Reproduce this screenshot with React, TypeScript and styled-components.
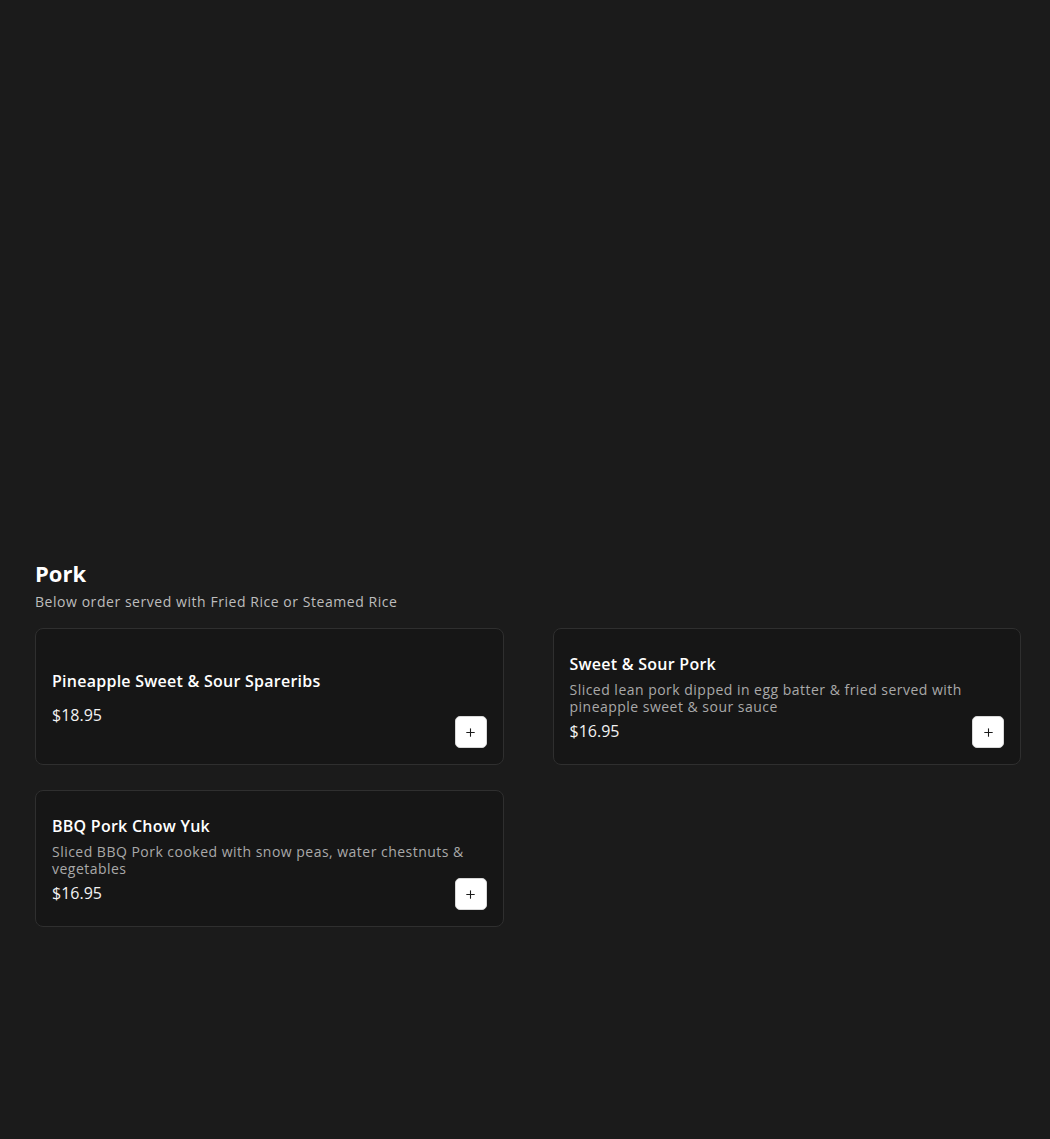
import styled, { createGlobalStyle } from "styled-components";
import { Plus } from "lucide-react";

type MenuItem = {
  id: number;
  name: string;
  description?: string;
  price: string;
};

const items: MenuItem[] = [
  { id: 1, name: "Pineapple Sweet & Sour Spareribs", price: "$18.95" },
  {
    id: 2,
    name: "Sweet & Sour Pork",
    description:
      "Sliced lean pork dipped in egg batter & fried served with pineapple sweet & sour sauce",
    price: "$16.95",
  },
  {
    id: 3,
    name: "BBQ Pork Chow Yuk",
    description:
      "Sliced BBQ Pork cooked with snow peas, water chestnuts & vegetables",
    price: "$16.95",
  },
];

const App = () => {
  return (
    <>
      <GlobalStyle />
      <Page>
        <Section>
          <SectionTitle>Pork</SectionTitle>
          <SectionNote>Below order served with Fried Rice or Steamed Rice</SectionNote>
          <Grid>
            {items.map((item) => (
              <Card key={item.id}>
                <CardText>
                  <ItemName>{item.name}</ItemName>
                  {item.description ? (
                    <ItemDescription>{item.description}</ItemDescription>
                  ) : (
                    <Spacer />
                  )}
                  <Price>{item.price}</Price>
                </CardText>
                <AddButton aria-label="Add">
                  <Plus size={13} strokeWidth={2} />
                </AddButton>
              </Card>
            ))}
          </Grid>
        </Section>
      </Page>
    </>
  );
};

export default App;

const GlobalStyle = createGlobalStyle`
  * { box-sizing: border-box; }
  body {
    margin: 0;
    background: #1b1b1b;
    font-family: "Open Sans", "Noto Sans", sans-serif;
    color: #ffffff;
  }
`;

const Page = styled.main`
  min-height: 1139px;
  padding: 0 29px 0 35px;
`;

const Section = styled.section`
  padding-top: 558px;
`;

const SectionTitle = styled.h2`
  margin: 0;
  font-size: 22px;
  line-height: 30px;
  font-weight: 700;
`;

const SectionNote = styled.p`
  margin: 4px 0 0;
  font-size: 14px;
  line-height: 20px;
  color: #bdbdbd;
  letter-spacing: 0.55px;
`;

const Grid = styled.div`
  display: grid;
  grid-template-columns: 1fr 1fr;
  column-gap: 49px;
  row-gap: 25px;
  margin-top: 16px;
`;

const Card = styled.article`
  display: grid;
  grid-template-columns: 1fr;
  grid-template-rows: 1fr;
  padding: 16px;
  background: #161616;
  border: 1px solid #2f2f2f;
  border-radius: 8px;

  & > * {
    grid-area: 1 / 1;
  }
`;

const CardText = styled.div`
  align-self: center;
  display: flex;
  flex-direction: column;
  gap: 6px;
  padding: 8px 0 7px;
`;

const ItemName = styled.h3`
  margin: 0;
  font-size: 16px;
  line-height: 22px;
  font-weight: 600;
  letter-spacing: 0.25px;
`;

const ItemDescription = styled.p`
  margin: 0;
  font-size: 14px;
  line-height: 17px;
  color: #a9a9a9;
  letter-spacing: 0.48px;
`;

const Spacer = styled.div`
  height: 1px;
`;

const Price = styled.span`
  font-size: 16px;
  line-height: 20px;
  color: #f2f2f2;
`;

const AddButton = styled.button`
  align-self: end;
  justify-self: end;
  width: 32px;
  height: 32px;
  display: flex;
  align-items: center;
  justify-content: center;
  padding: 0;
  background: #ffffff;
  color: #1b1b1b;
  border: 1px solid #d8d8d8;
  border-radius: 5px;
  cursor: pointer;
`;
